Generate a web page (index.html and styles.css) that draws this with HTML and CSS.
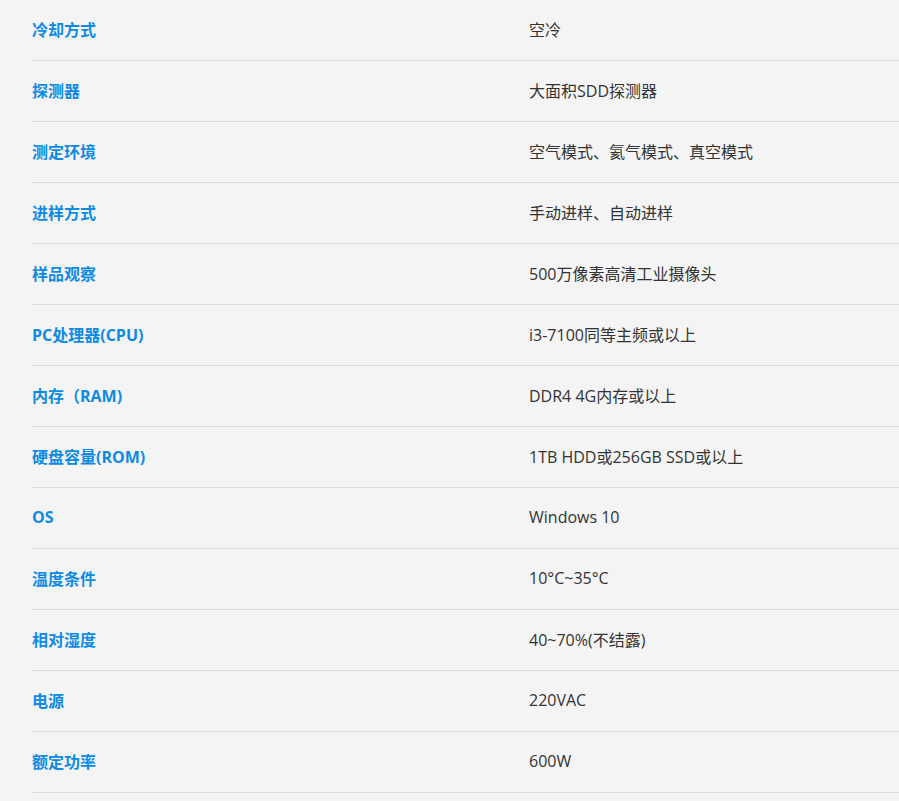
FILE: index.html
```html
<!DOCTYPE html>
<html lang="zh-CN">
<head>
<meta charset="utf-8">
<link rel="stylesheet" href="styles.css">
</head>
<body>
<div class="spec">
  <div class="row"><div class="k">冷却方式</div><div class="v">空冷</div></div>
  <div class="row"><div class="k">探测器</div><div class="v">大面积SDD探测器</div></div>
  <div class="row"><div class="k">测定环境</div><div class="v">空气模式、氦气模式、真空模式</div></div>
  <div class="row"><div class="k">进样方式</div><div class="v">手动进样、自动进样</div></div>
  <div class="row"><div class="k">样品观察</div><div class="v">500万像素高清工业摄像头</div></div>
  <div class="row"><div class="k">PC处理器(CPU)</div><div class="v">i3-7100同等主频或以上</div></div>
  <div class="row"><div class="k">内存（RAM)</div><div class="v">DDR4 4G内存或以上</div></div>
  <div class="row"><div class="k">硬盘容量(ROM)</div><div class="v">1TB HDD或256GB SSD或以上</div></div>
  <div class="row"><div class="k">OS</div><div class="v">Windows 10</div></div>
  <div class="row"><div class="k">温度条件</div><div class="v">10°C~35°C</div></div>
  <div class="row"><div class="k">相对湿度</div><div class="v">40~70%(不结露)</div></div>
  <div class="row"><div class="k">电源</div><div class="v">220VAC</div></div>
  <div class="row"><div class="k">额定功率</div><div class="v">600W</div></div>
</div>
</body>
</html>
```
FILE: styles.css
```css
html, body {
  margin: 0;
  padding: 0;
  background: #f4f4f4;
}
body {
  font-family: "Open Sans", "Noto Sans CJK SC", sans-serif;
  font-size: 16px;
  overflow: hidden;
}
.spec {
  padding-left: 32px;
}
.row {
  display: grid;
  grid-template-columns: 497px 1fr;
  height: 58px;
  padding-bottom: 2px;
  align-items: center;
  border-bottom: 1px solid #dddddd;
}
.k {
  color: #0d8be3;
  font-weight: 700;
}
.v {
  color: #333333;
}
```
